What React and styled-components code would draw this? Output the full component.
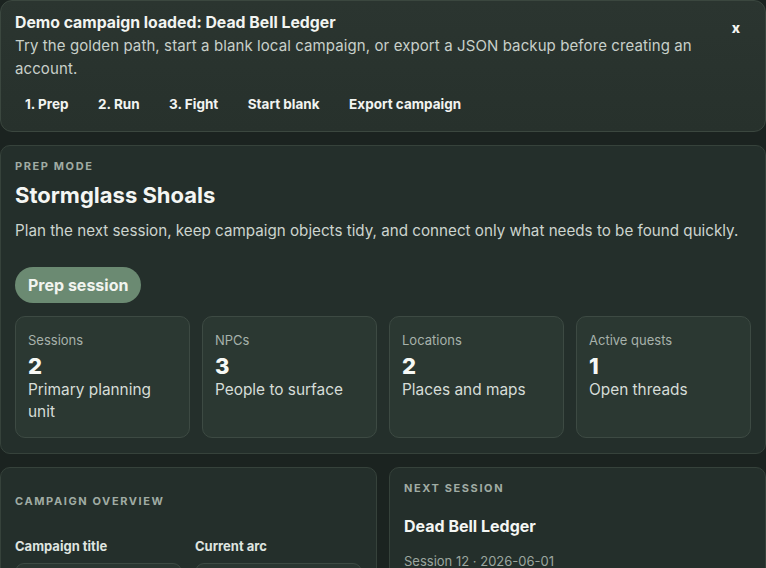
import React from 'react'
import styled, { createGlobalStyle } from 'styled-components'

const GlobalStyle = createGlobalStyle`
    body {
        margin: 0;
        background: #1b2320;
        font-family: Inter, 'Noto Sans', sans-serif;
        color: #eef2ee;
    }
`

const Page = styled.main`
    display: flex;
    flex-direction: column;
    gap: 13px;
    width: 766px;
    height: 568px;
    overflow: hidden;
`

const Banner = styled.section`
    position: relative;
    padding: 11px 14px 10px 14px;
    border: 1px solid #3b473f;
    border-radius: 12px;
    background: linear-gradient(180deg, #2b3530 0%, #27312c 100%);
`

const BannerTitle = styled.h2`
    margin: 0;
    font-size: 15.8px;
    line-height: 22px;
    font-weight: 700;
    color: #f2f4f1;
`

const BannerText = styled.p`
    margin: 0;
    padding-right: 50px;
    font-size: 15px;
    line-height: 23px;
    letter-spacing: 0.1px;
    color: #c8d0ca;
`

const Actions = styled.div`
    display: flex;
    gap: 9.5px;
    margin-top: 7px;
`

const LinkButton = styled.button`
    padding: 8px 10px;
    border: 0;
    background: transparent;
    font-family: inherit;
    font-size: 13.5px;
    line-height: 18px;
    font-weight: 700;
    color: #f2f4f1;
`

const Close = styled.button`
    position: absolute;
    top: 18px;
    right: 25px;
    padding: 0;
    border: 0;
    background: transparent;
    font-family: inherit;
    font-size: 14px;
    font-weight: 800;
    color: #f4f6f3;
`

const Card = styled.section`
    padding: ${(props) => props.pad || '13px 14px 15px 14px'};
    border: 1px solid #36423b;
    border-radius: 10px;
    background: #242f2b;
`

const Eyebrow = styled.div`
    font-size: 11px;
    line-height: 14px;
    font-weight: 700;
    letter-spacing: 1.6px;
    text-transform: uppercase;
    color: #a0aca4;
`

const Title = styled.h1`
    margin: 8px 0 0 0;
    font-size: 22px;
    line-height: 28px;
    font-weight: 700;
    color: #f4f6f3;
`

const Lead = styled.p`
    margin: 11px 0 0 0;
    font-size: 15.2px;
    line-height: 22px;
    color: #ccd4ce;
`

const Pill = styled.button`
    margin-top: 25px;
    height: 36px;
    padding: 0 13px;
    border: 0;
    border-radius: 18px;
    background: #6b8a72;
    font-family: inherit;
    font-size: 16px;
    font-weight: 700;
    color: #f1f4ef;
`

const Stats = styled.div`
    display: grid;
    grid-template-columns: repeat(4, 1fr);
    gap: 12px;
    margin-top: 13px;
`

const Stat = styled.div`
    padding: 14px 12px 14px 12px;
    border: 1px solid #3d4a43;
    border-radius: 10px;
    background: #2b3832;
`

const StatLabel = styled.div`
    font-size: 13px;
    line-height: 18px;
    color: #a7b2ab;
`

const StatValue = styled.div`
    margin-top: 4px;
    font-size: 22px;
    line-height: 26px;
    font-weight: 800;
    color: #f6f8f5;
`

const StatText = styled.div`
    font-size: 15.4px;
    line-height: 22px;
    color: #d6ddd8;
`

const Columns = styled.div`
    display: grid;
    grid-template-columns: 377px 1fr;
    gap: 12px;
`

const FieldGrid = styled.div`
    display: grid;
    grid-template-columns: 1fr 1fr;
    gap: 13px;
    margin-top: 29px;
`

const Field = styled.label`
    display: flex;
    flex-direction: column;
    gap: 8px;
    font-size: 13px;
    line-height: 18px;
    font-weight: 700;
    color: #dfe5e0;
`

const Input = styled.div`
    height: 36px;
    border: 1px solid #3d4a43;
    border-radius: 9px;
    background: #2a3631;
`

const SessionName = styled.div`
    margin-top: 20px;
    font-size: 16px;
    line-height: 22px;
    font-weight: 700;
    color: #f4f6f3;
`

const Meta = styled.div`
    margin-top: 15px;
    font-size: 13px;
    line-height: 18px;
    color: #9ba69f;
`

const stats = [
    { label: 'Sessions', value: 2, text: 'Primary planning unit' },
    { label: 'NPCs', value: 3, text: 'People to surface' },
    { label: 'Locations', value: 2, text: 'Places and maps' },
    { label: 'Active quests', value: 1, text: 'Open threads' },
]

const App = () => {
    return (
        <>
            <GlobalStyle />
            <Page>
                <Banner>
                    <BannerTitle>Demo campaign loaded: Dead Bell Ledger</BannerTitle>
                    <BannerText>
                        Try the golden path, start a blank local campaign, or export a JSON backup before creating an account.
                    </BannerText>
                    <Actions>
                        <LinkButton>1. Prep</LinkButton>
                        <LinkButton>2. Run</LinkButton>
                        <LinkButton>3. Fight</LinkButton>
                        <LinkButton>Start blank</LinkButton>
                        <LinkButton>Export campaign</LinkButton>
                    </Actions>
                    <Close>x</Close>
                </Banner>

                <Card>
                    <Eyebrow>Prep mode</Eyebrow>
                    <Title>Stormglass Shoals</Title>
                    <Lead>Plan the next session, keep campaign objects tidy, and connect only what needs to be found quickly.</Lead>
                    <Pill>Prep session</Pill>
                    <Stats>
                        {stats.map((s) => (
                            <Stat key={s.label}>
                                <StatLabel>{s.label}</StatLabel>
                                <StatValue>{s.value}</StatValue>
                                <StatText>{s.text}</StatText>
                            </Stat>
                        ))}
                    </Stats>
                </Card>

                <Columns>
                    <Card pad="26px 14px 15px 14px">
                        <Eyebrow>Campaign overview</Eyebrow>
                        <FieldGrid>
                            <Field>Campaign title<Input /></Field>
                            <Field>Current arc<Input /></Field>
                        </FieldGrid>
                    </Card>
                    <Card>
                        <Eyebrow>Next session</Eyebrow>
                        <SessionName>Dead Bell Ledger</SessionName>
                        <Meta>Session 12 · 2026-06-01</Meta>
                    </Card>
                </Columns>
            </Page>
        </>
    )
}

export default App
